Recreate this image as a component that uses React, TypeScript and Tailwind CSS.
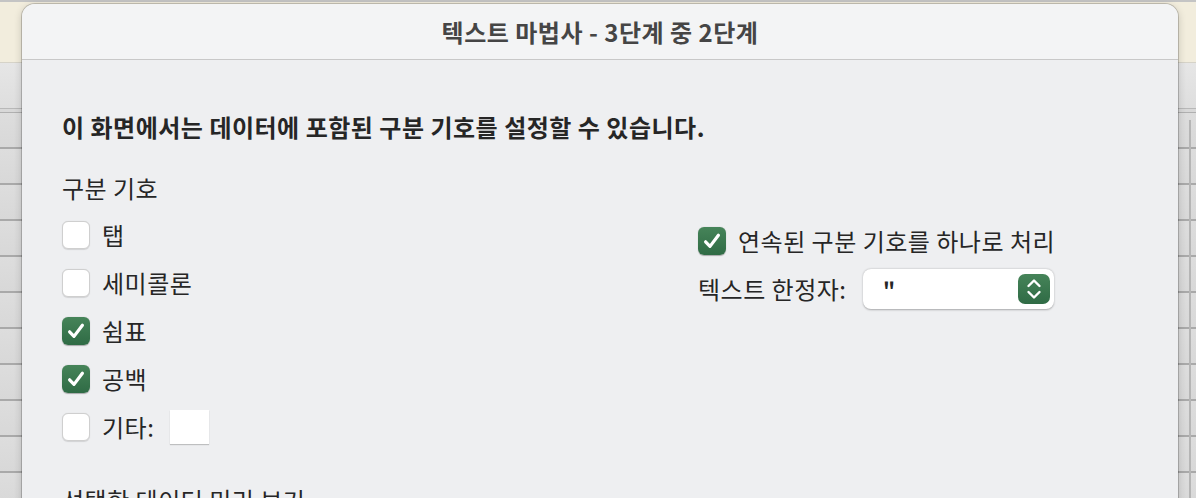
import React from "react";

const font = { fontFamily: '"Noto Sans CJK KR", "Noto Sans", sans-serif' };

function Check({ checked }: { checked: boolean }) {
  if (checked) {
    return (
      <div className="flex h-[28px] w-[28px] shrink-0 items-center justify-center rounded-[6px] bg-gradient-to-b from-[#468459] to-[#2f6b45] shadow-[0_0.5px_1px_rgba(0,0,0,0.3)]">
        <svg width="22" height="22" viewBox="0 0 22 22" fill="none">
          <path d="M4.6 11.8 L9 16.4 L17.4 5.2" stroke="white" strokeWidth="3.2" strokeLinecap="round" strokeLinejoin="round" />
        </svg>
      </div>
    );
  }
  return (
    <div className="h-[28px] w-[28px] shrink-0 rounded-[6px] border border-[#cfcfcf] bg-white shadow-[0_0.5px_1px_rgba(0,0,0,0.12)]" />
  );
}

function Row({ checked, label, children }: { checked: boolean; label: string; children?: React.ReactNode }) {
  return (
    <div className="flex h-[28px] items-center">
      <Check checked={checked} />
      <span className="ml-[12px] text-[24px] leading-[28px] tracking-[0.5px] text-[#262626]">{label}</span>
      {children}
    </div>
  );
}

export default function App() {
  return (
    <div className="relative h-[498px] w-[1196px] overflow-hidden bg-[#dcdcdc]" style={font}>
      {/* background app */}
      <div className="flex h-full flex-col">
        <div className="h-[2px] bg-[#c4c4c4]" />
        <div className="h-[61px] bg-[#f2eddd] border-b border-[#d6d3c8]" />
        <div className="h-[46px] bg-gradient-to-b from-[#e6e6e6] to-[#dedede] border-b border-[#b8b8b8]" />
        <div className="h-[4px] border-b border-[#b0b0b0] bg-[#d8d8d8]" />
        <div className="flex-1 bg-[repeating-linear-gradient(to_bottom,#dddddd_0px,#d8d8d8_34px,#a9a9a9_34px,#a9a9a9_36px)]" />
      </div>
      <div className="absolute right-[5px] top-[120px] bottom-0 w-[2px] bg-[#b5b5b5]" />

      {/* dialog */}
      <div className="absolute left-[22px] right-[18px] top-[4px] bottom-[-20px] flex flex-col overflow-hidden rounded-t-[13px] bg-[#eeeff1] shadow-[0_0_0_1px_rgba(0,0,0,0.18),0_2px_8px_rgba(0,0,0,0.2)]">
        <div className="flex h-[56px] shrink-0 items-center justify-center border-b border-[#c8c8c8] bg-[#f3f4f5]">
          <span className="text-[24px] font-bold leading-none tracking-[0.5px] text-[#454545]">텍스트 마법사 - 3단계 중 2단계</span>
        </div>
        <div className="flex flex-col pl-[40px]">
          <div className="mt-[51px] text-[24px] font-bold leading-[32px] tracking-[0.5px] text-[#262626]">
            이 화면에서는 데이터에 포함된 구분 기호를 설정할 수 있습니다.
          </div>
          <div className="mt-[29px] text-[24px] leading-[32px] tracking-[0.5px] text-[#262626]">구분 기호</div>
          <div className="mt-[17px] flex">
            <div className="flex w-[636px] flex-col gap-[20px]">
              <Row checked={false} label="탭" />
              <Row checked={false} label="세미콜론" />
              <Row checked={true} label="쉼표" />
              <Row checked={true} label="공백" />
              <Row checked={false} label="기타:">
                <div className="ml-[16px] h-[34px] w-[39px] bg-white shadow-[0_1px_1px_rgba(0,0,0,0.2)]" />
              </Row>
            </div>
            <div className="flex flex-col pt-[6px]">
              <Row checked={true} label="연속된 구분 기호를 하나로 처리" />
              <div className="mt-[14px] flex items-center">
                <span className="w-[165px] shrink-0 text-[24px] leading-[28px] tracking-[0.5px] text-[#262626]">텍스트 한정자:</span>
                <div className="flex h-[40px] w-[191px] items-center justify-between rounded-[8px] bg-white pl-[20px] pr-[4px] shadow-[0_0.5px_2px_rgba(0,0,0,0.3)]">
                  <span className="text-[21px] font-bold leading-none text-[#262626]">"</span>
                  <div className="flex h-[30px] w-[32px] items-center justify-center rounded-[7px] bg-gradient-to-b from-[#468459] to-[#2f6b45]">
                    <svg width="18" height="26" viewBox="0 0 18 26" fill="none">
                      <path d="M3.5 10 L9 4.5 L14.5 10" stroke="white" strokeWidth="2.4" strokeLinecap="round" strokeLinejoin="round" />
                      <path d="M3.5 16 L9 21.5 L14.5 16" stroke="white" strokeWidth="2.4" strokeLinecap="round" strokeLinejoin="round" />
                    </svg>
                  </div>
                </div>
              </div>
            </div>
          </div>
          <div className="mt-[43px] text-[24px] leading-[32px] tracking-[0.5px] text-[#262626]">선택한 데이터 미리 보기</div>
        </div>
      </div>
    </div>
  );
}
